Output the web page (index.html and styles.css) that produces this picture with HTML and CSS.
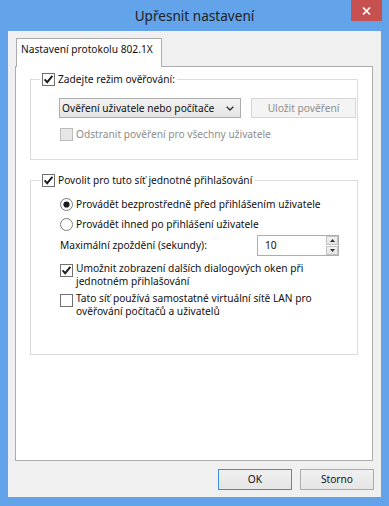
FILE: index.html
```html
<!DOCTYPE html>
<html lang="cs">
<head>
<meta charset="utf-8">
<title>Upřesnit nastavení</title>
<link rel="stylesheet" href="styles.css">
</head>
<body>
<div class="window">
  <div class="titlebar">
    <div class="title">Upřesnit nastavení</div>
    <div class="close"><svg width="9" height="8" viewBox="0 0 9 8"><path d="M1 0.5 L8 7.5 M8 0.5 L1 7.5" stroke="#fff" stroke-width="1.7" fill="none"/></svg></div>
  </div>
  <div class="client">
    <div class="tabstrip"><div class="tab">Nastavení protokolu 802.1X</div></div>
    <div class="panel">
      <fieldset class="group group-auth">
        <legend class="legend">
          <span class="chk"><svg width="11" height="11" viewBox="0 0 11 11"><path d="M1.6 5.4 L4.2 8.2 L9.4 1.9" stroke="#1c1c1c" stroke-width="1.9" fill="none"/></svg></span>
          <span>Zadejte režim ověřování:</span>
        </legend>
        <div class="combo-row">
          <div class="combo"><span>Ověření uživatele nebo počítače</span><svg class="chev" width="8" height="5" viewBox="0 0 8 5"><path d="M0.7 0.7 L4 4 L7.3 0.7" stroke="#333" stroke-width="1.4" fill="none"/></svg></div>
          <div class="btn btn-disabled">Uložit pověření</div>
        </div>
        <div class="opt opt-disabled">
          <span class="chk chk-disabled"></span>
          <span>Odstranit pověření pro všechny uživatele</span>
        </div>
      </fieldset>

      <fieldset class="group group-sso">
        <legend class="legend">
          <span class="chk"><svg width="11" height="11" viewBox="0 0 11 11"><path d="M1.6 5.4 L4.2 8.2 L9.4 1.9" stroke="#1c1c1c" stroke-width="1.9" fill="none"/></svg></span>
          <span>Povolit pro tuto síť jednotné přihlašování</span>
        </legend>
        <div class="opt radio-row first-radio">
          <svg class="radio" width="13" height="13" viewBox="0 0 13 13"><circle cx="6.5" cy="6.5" r="6" fill="#fff" stroke="#7a7a7a"/><circle cx="6.5" cy="6.5" r="3.1" fill="#1c1c1c"/></svg>
          <span>Provádět bezprostředně před přihlášením uživatele</span>
        </div>
        <div class="opt radio-row second-radio">
          <svg class="radio" width="13" height="13" viewBox="0 0 13 13"><circle cx="6.5" cy="6.5" r="6" fill="#fff" stroke="#7a7a7a"/></svg>
          <span>Provádět ihned po přihlášení uživatele</span>
        </div>
        <div class="delay-row">
          <span class="delay-label">Maximální zpoždění (sekundy):</span>
          <div class="spin">
            <span class="spin-value">10</span>
            <div class="spin-buttons">
              <div class="spin-btn"><svg width="5" height="3" viewBox="0 0 5 3"><path d="M0 3 L2.5 0 L5 3 Z" fill="#333"/></svg></div>
              <div class="spin-btn"><svg width="5" height="3" viewBox="0 0 5 3"><path d="M0 0 L2.5 3 L5 0 Z" fill="#333"/></svg></div>
            </div>
          </div>
        </div>
        <div class="opt multi multi-first">
          <span class="chk"><svg width="11" height="11" viewBox="0 0 11 11"><path d="M1.6 5.4 L4.2 8.2 L9.4 1.9" stroke="#1c1c1c" stroke-width="1.9" fill="none"/></svg></span>
          <span class="multi-text">Umožnit zobrazení dalších dialogových oken při<br>jednotném přihlašování</span>
        </div>
        <div class="opt multi multi-second">
          <span class="chk"></span>
          <span class="multi-text">Tato síť používá samostatné virtuální sítě LAN pro<br>ověřování počítačů a uživatelů</span>
        </div>
      </fieldset>
    </div>
    <div class="buttons">
      <div class="btn btn-default">OK</div>
      <div class="btn">Storno</div>
    </div>
  </div>
</div>
</body>
</html>
```

FILE: styles.css
```css
* { box-sizing: border-box; }

html, body { height: 100%; }

body {
  margin: 0;
  background: #62a3ea;
  font-family: "Noto Sans", "DejaVu Sans", sans-serif;
  font-size: 10.2px;
  line-height: 13px;
  color: #111;
}

.window {
  height: 506px;
  display: flex;
  flex-direction: column;
}

.titlebar {
  height: 31px;
  flex: none;
  display: grid;
  grid-template-columns: 1fr auto 1fr;
}

.title {
  grid-column: 2;
  align-self: center;
  font-size: 13.6px;
  line-height: 17px;
  color: #1f1f1f;
  padding-bottom: 1px;
  white-space: nowrap;
}

.close {
  grid-column: 3;
  justify-self: end;
  align-self: start;
  width: 31px;
  height: 21px;
  margin-right: 7px;
  background: #c75050;
  display: flex;
  align-items: center;
  justify-content: center;
}

.client {
  flex: 1;
  margin: 0 8px 9px;
  background: #f0f0f0;
  display: flex;
  flex-direction: column;
}

.tabstrip {
  display: flex;
  padding: 7px 0 0 8px;
  flex: none;
}

.tab {
  position: relative;
  z-index: 1;
  width: 146px;
  height: 29px;
  margin-bottom: -1px;
  padding: 4px 0 0 4px;
  background: #fff;
  border: 1px solid #acacac;
  border-bottom: 0;
  white-space: nowrap;
}

.panel {
  flex: 1;
  margin: 0 8px 0 7px;
  background: #fff;
  border: 1px solid #acacac;
  padding: 0 14px;
  display: flex;
  flex-direction: column;
}

.group {
  margin: 0;
  padding: 0 0 18px 0;
  border: 1px solid #dcdcdc;
  min-width: 0;
}

.group-auth { margin-top: 6px; }
.group-sso { margin-top: 14px; padding-bottom: 36px; }

.legend {
  margin-left: 9px;
  padding: 0 2px;
  height: 13px;
  display: flex;
  align-items: center;
  gap: 3px;
  white-space: nowrap;
}

.chk {
  flex: none;
  width: 13px;
  height: 13px;
  border: 1px solid #707070;
  background: #fff;
  display: flex;
}

.chk-disabled {
  border-color: #bcbcbc;
  background: #e6e6e6;
}

.combo-row {
  display: flex;
  align-items: center;
  margin: 12px 1px 0 28px;
  height: 20px;
}

.combo {
  width: 182px;
  height: 20px;
  border: 1px solid #acacac;
  background: linear-gradient(#f2f2f2, #e5e5e5);
  display: flex;
  align-items: center;
  justify-content: space-between;
  padding: 0 6px 0 2px;
  white-space: nowrap;
}

.chev { flex: none; }

.btn {
  width: 74px;
  height: 21px;
  border: 1px solid #acacac;
  background: linear-gradient(#f0f0f0, #e5e5e5);
  display: flex;
  align-items: center;
  justify-content: center;
  white-space: nowrap;
}

.btn-disabled {
  margin-left: auto;
  width: 105px;
  height: 20px;
  border-color: #d5d5d5;
  background: #f4f4f4;
  color: #8d8d8d;
}

.btn-default {
  border-color: #3c8ee0;
}

.opt {
  display: flex;
  align-items: center;
  gap: 3px;
  height: 13px;
  margin-left: 29px;
  white-space: nowrap;
}

.opt-disabled {
  margin-top: 10px;
  color: #8d8d8d;
}

.radio { flex: none; }

.first-radio { margin-top: 11px; }
.second-radio { margin-top: 7px; }

.delay-row {
  display: flex;
  align-items: center;
  height: 21px;
  margin: 4px 0 0 29px;
}

.delay-label {
  width: 197px;
  white-space: nowrap;
}

.spin {
  width: 82px;
  height: 21px;
  border: 1px solid #abadb3;
  background: #fff;
  display: flex;
  align-items: center;
  justify-content: space-between;
  padding: 0 0 0 7px;
}

.spin-buttons {
  width: 12px;
  height: 19px;
  display: flex;
  flex-direction: column;
  gap: 1px;
}

.spin-btn {
  flex: 1;
  border: 1px solid #c4c4c4;
  background: linear-gradient(#f2f2f2, #e3e3e3);
  display: flex;
  align-items: center;
  justify-content: center;
}

.multi {
  height: auto;
  align-items: flex-start;
}

.multi .chk { margin-top: 2px; }

.multi-first { margin-top: 6px; }
.multi-second { margin-top: 4px; }

.buttons {
  flex: none;
  display: flex;
  justify-content: flex-end;
  gap: 8px;
  padding: 8px 7px 7px;
}
```
